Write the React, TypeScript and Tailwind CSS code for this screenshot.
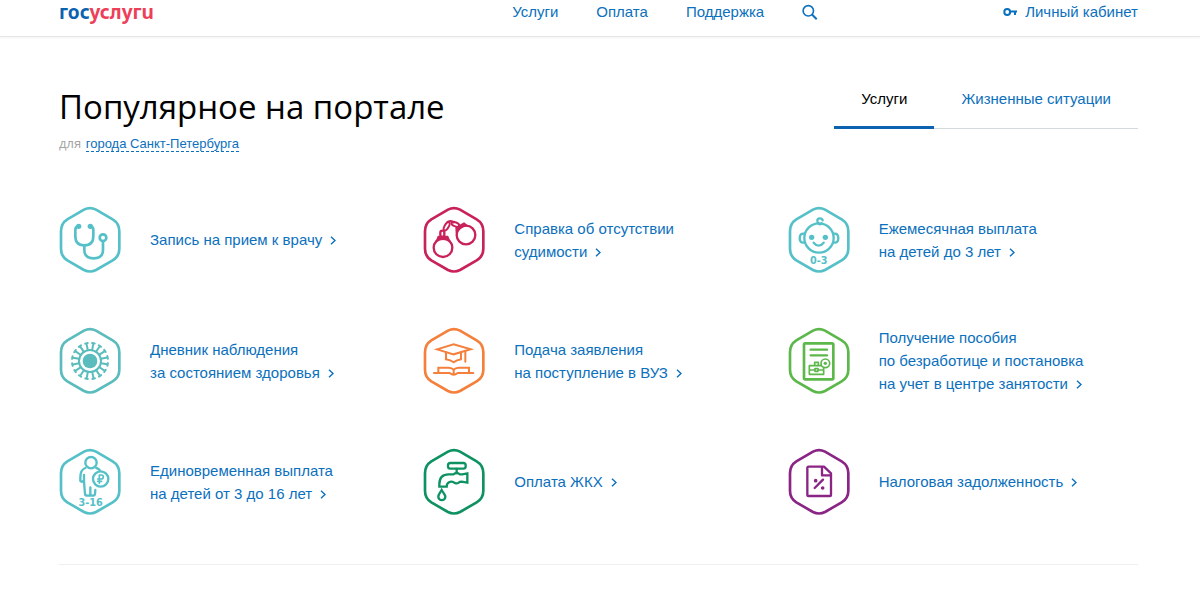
import type { ReactNode } from "react";

function Hex({ className, children }: { className: string; children: ReactNode }) {
  return (
    <svg
      viewBox="27 18 186 204"
      className={`h-[68px] w-[62px] shrink-0 ${className}`}
      fill="none"
      stroke="currentColor"
      strokeWidth="7"
      strokeLinecap="round"
      strokeLinejoin="round"
      aria-hidden="true"
    >
      <path d="M102 29Q120 20 138 29L188 58Q208 70 208 94V146Q208 169 188 181L138 210Q120 219 102 210L52 181Q33 169 33 146V94Q33 70 52 58Z" strokeWidth="8" />
      {children}
    </svg>
  );
}

const stethoscope = (
  <>
    <path d="M84 80Q76 80 76 90V108C76 126 86 136 103 136S130 126 130 108V90Q130 80 122 80" strokeWidth="8" />
    <path d="M103 138V150C103 166 113 175 131 175S159 166 159 150V126" strokeWidth="8" />
    <circle cx="159" cy="113" r="10" strokeWidth="8" />
    <circle cx="86" cy="79" r="8" fill="currentColor" stroke="none" />
    <circle cx="121" cy="79" r="8" fill="currentColor" stroke="none" />
  </>
);

const handcuffs = (
  <>
    <circle cx="87" cy="143" r="28" />
    <circle cx="156" cy="105" r="28" />
    <path d="M67 124L73 109H101L107 124Q87 112 67 124Z" fill="currentColor" strokeWidth="4" />
    <path d="M127 99L126 83L150 69L160 77Q138 80 127 99Z" fill="currentColor" strokeWidth="4" />
    <rect x="79" y="92" width="12" height="19" rx="6" />
    <ellipse cx="98" cy="79" rx="6" ry="14" transform="rotate(30 98 79)" strokeWidth="6" />
    <path d="M101 66Q112 60 119 67" />
    <ellipse cx="124" cy="73" rx="12" ry="6" transform="rotate(22 124 73)" strokeWidth="6" />
  </>
);

const baby = (
  <>
    <circle cx="120" cy="114" r="44" />
    <path d="M76 101C66 99 62 106 62 115S67 130 76 127M164 101C174 99 178 106 178 115S173 130 164 127" />
    <path d="M120 72C112 65 114 55 122 55Q130 55 131 61M120 72Q126 74 128 70" />
    <circle cx="98" cy="112" r="8" fill="currentColor" stroke="none" />
    <circle cx="139" cy="112" r="8" fill="currentColor" stroke="none" />
    <path d="M104 128Q119 146 134 128" />
    <text x="119" y="193" textAnchor="middle" className="font-['DejaVu_Sans'] text-[29px] font-bold" fill="currentColor" stroke="none">0-3</text>
  </>
);

const spikes = Array.from({ length: 16 }, (_, i) => i * 22.5);
const virus = (
  <>
    <circle cx="120" cy="120" r="22" fill="currentColor" stroke="none" />
    <circle cx="120" cy="120" r="33" strokeWidth="6" />
    {spikes.map((a) => (
      <path key={a} d="M120 86V68M116 66H124" transform={`rotate(${a + 11} 120 120)`} strokeWidth="6" />
    ))}
  </>
);

const graduation = (
  <g strokeWidth="6" strokeLinejoin="miter">
    <path d="M69 85L119 70L170 85L119 100Z" />
    <path d="M96 94V115Q110 117 119 124Q128 117 141 115V94" />
    <path d="M154 92V122" />
    <path d="M73 153V140H104Q114 141 119 146Q124 141 134 140H165V153" />
    <path d="M60 156H107Q119 166 131 156H178M119 146V160" />
  </g>
);

const jobless = (
  <>
    <rect x="75" y="67" width="88" height="108" rx="4" strokeWidth="8" />
    <path d="M95 86H144M95 103H144" />
    <rect x="91" y="134" width="43" height="26" strokeWidth="5" />
    <path d="M107 132V124H118V132M93 147H106M119 147H132M108 143H117V151H108Z" strokeWidth="5" />
    <circle cx="139" cy="127" r="13" fill="white" strokeWidth="5" />
    <circle cx="139" cy="127" r="5" fill="currentColor" stroke="none" />
  </>
);

const child = (
  <>
    <circle cx="123" cy="62" r="17" />
    <path d="M106 78C94 82 91 91 91 107V117Q95 121 100 117M102 99V119L105 156Q106 161 112 161Q121 161 121 155V136M121 155Q121 161 128 161Q134 161 135 156L136 144M139 78Q147 80 150 86" />
    <circle cx="152" cy="111" r="23" fill="white" />
    <path d="M148 124V99H154Q160 99 160 105T154 111H143M143 118H155" strokeWidth="5" />
    <text x="122" y="191" textAnchor="middle" className="font-['DejaVu_Sans'] text-[29px] font-bold" fill="currentColor" stroke="none">3-16</text>
  </>
);

const tap = (
  <g strokeLinejoin="miter">
    <rect x="102" y="63" width="53" height="17" rx="7" />
    <path d="M128 81V93" />
    <path d="M76 134V127C76 107 87 97 104 97H118Q128 89 138 97H145L160 94V122L143 119Q137 119 134 122Q127 127 119 121Q112 117 105 121Q98 125 98 134Z" />
    <path d="M83 144C78 153 73 158 73 164A10 10 0 0 0 94 164C94 158 88 153 83 144Z" />
  </g>
);

const tax = (
  <>
    <path d="M89 74H135L156 94V158Q156 162 152 162H89Q85 162 85 158V78Q85 74 89 74Z" />
    <path d="M129 77V100H155" />
    <path d="M107 138L132 113" />
    <circle cx="110" cy="116" r="5.5" fill="currentColor" stroke="none" />
    <circle cx="131" cy="138" r="5.5" fill="currentColor" stroke="none" />
  </>
);

const services = [
  { color: "text-[#55c0c8]", icon: stethoscope, lines: ["Запись на прием к врачу"] },
  { color: "text-[#c9225a]", icon: handcuffs, lines: ["Справка об отсутствии", "судимости"] },
  { color: "text-[#55c0c8]", icon: baby, lines: ["Ежемесячная выплата", "на детей до 3 лет"] },
  { color: "text-[#5abcbc]", icon: virus, lines: ["Дневник наблюдения", "за состоянием здоровья"] },
  { color: "text-[#f4803c]", icon: graduation, lines: ["Подача заявления", "на поступление в ВУЗ"] },
  { color: "text-[#5cb84a]", icon: jobless, lines: ["Получение пособия", "по безработице и постановка", "на учет в центре занятости"] },
  { color: "text-[#55c0c8]", icon: child, lines: ["Единовременная выплата", "на детей от 3 до 16 лет"] },
  { color: "text-[#0f9262]", icon: tap, lines: ["Оплата ЖКХ"] },
  { color: "text-[#8a2585]", icon: tax, lines: ["Налоговая задолженность"] },
];

function Chevron() {
  return (
    <svg viewBox="0 0 6 9" className="ml-2 inline-block h-[9px] w-1.5 align-baseline" fill="none" stroke="currentColor" strokeWidth="1.4" aria-hidden="true">
      <path d="M1 0.8L5 4.5L1 8.2" />
    </svg>
  );
}

export default function App() {
  return (
    <div className="bg-white font-['Liberation_Sans',Arial,sans-serif] text-[15px] text-[#0b70bd]">
      <header className="border-b border-[#e6e6e6] pr-[62px] pb-3 pl-[59px] shadow-[0_1px_2px_rgba(0,0,0,0.05)]">
        <div className="grid grid-cols-[42%_1fr_auto] items-center leading-6">
          <a href="#" aria-label="госуслуги" className="font-['Noto_Sans',sans-serif] text-[19px] font-bold text-[#0b63b0]">
            гос<span className="text-[#ee3f58]">услугu</span>
          </a>
          <nav className="flex items-center gap-[38px]">
            <a href="#">Услуги</a>
            <a href="#">Оплата</a>
            <a href="#">Поддержка</a>
            <button type="button" aria-label="Поиск">
              <svg viewBox="0 0 16 16" className="h-4 w-4" fill="none" stroke="currentColor" strokeWidth="1.6" aria-hidden="true">
                <circle cx="6.3" cy="6.8" r="5.2" />
                <path d="M10 10.5L14.7 15.2" strokeWidth="2" />
              </svg>
            </button>
          </nav>
          <a href="#" className="flex items-center gap-2">
            <svg viewBox="0 0 14 10" className="h-2.5 w-3.5" fill="none" stroke="currentColor" strokeWidth="2" aria-hidden="true">
              <circle cx="4.2" cy="5" r="2.9" />
              <path d="M7 4.6H14M12 4.6V8" />
            </svg>
            Личный кабинет
          </a>
        </div>
      </header>

      <main className="pt-[46px] pr-[62px] pl-[59px]">
        <div className="flex items-start justify-between">
          <div>
            <h1 className="font-['Open_Sans','Noto_Sans',sans-serif] text-[33px] leading-[48px] text-black">Популярное на портале</h1>
            <p className="mt-0.5 text-[13px] leading-5">
              <span className="mr-px font-['Open_Sans',sans-serif] text-[#a3a3a3]">для</span>{" "}
              <a href="#" className="border-b border-dashed border-[#0b70bd]">города Санкт-Петербурга</a>
            </p>
          </div>
          <div role="tablist" className="flex border-b border-[#d4d9de] leading-6">
            <button type="button" role="tab" aria-selected="true" className="-mb-px border-b-3 border-[#0b63b0] px-[27px] pt-1 pb-[15px] text-black">
              Услуги
            </button>
            <button type="button" role="tab" aria-selected="false" className="px-[27px] pt-1 pb-[17px]">
              Жизненные ситуации
            </button>
          </div>
        </div>

        <ul className="mt-[51px] grid grid-cols-3 gap-x-3.5 gap-y-[52px] border-b border-[#eeeeee] pb-12">
          {services.map((s) => (
            <li key={s.lines[0]}>
              <a href="#" className="flex min-h-[69px] items-center gap-[29px]">
                <Hex className={s.color}>{s.icon}</Hex>
                <span className="leading-[23px]">
                  {s.lines.map((line, i) => (
                    <span key={line} className="block">
                      {line}
                      {i === s.lines.length - 1 && <Chevron />}
                    </span>
                  ))}
                </span>
              </a>
            </li>
          ))}
        </ul>
      </main>
    </div>
  );
}
